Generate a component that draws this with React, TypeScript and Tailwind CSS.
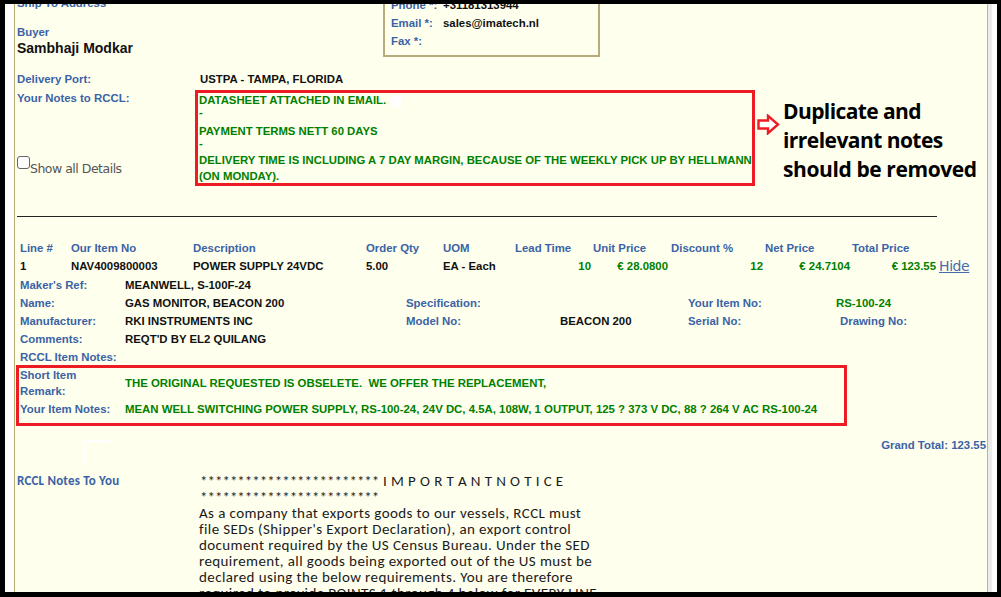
import React from "react";

const T = "font-['Liberation_Sans',Arial,sans-serif]";
const C = "font-['Carlito','Lato',sans-serif]";
const BL = "text-[#3a63a6] font-bold";
const GR = "text-[#008000] font-bold";
const BK = "text-[#111111] font-bold";

function Arrow() {
  return (
    <svg width="23" height="21" viewBox="0 0 23 21" className="block">
      <path
        d="M1.5 6.5 H11 V1.8 L21 10.5 L11 19.2 V14.5 H1.5 Z"
        fill="#ffffff"
        stroke="#ed1c24"
        strokeWidth="2.4"
        strokeLinejoin="miter"
      />
    </svg>
  );
}

export default function App() {
  const cols = "grid grid-cols-[51px_122px_173px_77px_72px_78px_78px_94px_87px_86px_auto]";
  return (
    <div className="w-[1001px] h-[597px] bg-black pt-[4px] pb-[5px] pl-[5px] pr-[4px] overflow-hidden">
      <div className="flex h-full bg-white">
        <div className="w-[9px] bg-white" />
        <div className={`flex-1 bg-[#ffffee] border-l border-r border-l-[#b3a96e] border-r-[#bdb49a] overflow-hidden text-[11.4px] leading-[18px] ${T}`}>
          <div className="-mt-[12px]">
            {/* Section A */}
            <div className="flex h-[65px]">
              <div className="w-[368px] pl-[2px] pt-[2px]">
                <div className={`h-[18px] ${BL}`}>Ship To Address</div>
                <div className={`mt-[13px] h-[14px] leading-[14px] ${BL}`}>Buyer</div>
                <div className={`h-[18px] text-[14px] text-[#111] font-bold`}>Sambhaji Modkar</div>
              </div>
              <div className="w-[217px] h-[65px] border-2 border-t-0 border-[#b8aa7c] pl-[6px] pt-[4px]">
                <div className="flex h-[18px]">
                  <span className={`w-[52px] ${BL}`}>Phone *:</span>
                  <span className={BK}>+31181313944</span>
                </div>
                <div className="flex h-[18px]">
                  <span className={`w-[52px] ${BL}`}>Email *:</span>
                  <span className={BK}>sales@imatech.nl</span>
                </div>
                <div className="flex h-[18px]">
                  <span className={`w-[52px] ${BL}`}>Fax *:</span>
                </div>
              </div>
            </div>

            {/* Delivery port */}
            <div className="mt-[13px] flex h-[18px]">
              <div className={`w-[180px] pl-[2px] ${BL}`}>Delivery Port:</div>
              <div className={`pl-[5px] ${BK}`}>USTPA - TAMPA, FLORIDA</div>
            </div>

            {/* Notes */}
            <div className="mt-[2px] flex">
              <div className="w-[180px] pl-[2px] flex flex-col">
                <div className={`mt-[1px] h-[14px] leading-[14px] ${BL}`}>Your Notes to RCCL:</div>
                <div className="mt-[51px] flex">
                  <div className="w-[13px] h-[13px] rounded-[3px] border border-[#666666] bg-[#fdfdfd]" />
                  <span className="mt-[6px] leading-[14px] text-[12.5px] text-[#555555] font-['DejaVu_Sans',sans-serif] font-normal tracking-[-0.5px]">Show all Details</span>
                </div>
              </div>
              <div className={`w-[560px] h-[96px] border-[3px] border-[#ed1c24] pl-[1px] pt-[1px] whitespace-nowrap text-[11.35px] ${GR}`}>
                <div className="h-[12px] leading-[12px] flex">
                  <span>DATASHEET ATTACHED IN EMAIL.</span>
                  <span className="ml-[5px] mt-[2px] w-[10px] h-[11px] bg-white" />
                </div>
                <div className="h-[12px] leading-[12px]">-</div>
                <div className="mt-[7px] h-[12px] leading-[12px]">PAYMENT TERMS NETT 60 DAYS</div>
                <div className="h-[12px] leading-[12px]">-</div>
                <div className="mt-[3px] h-[16px] leading-[16px]">DELIVERY TIME IS INCLUDING A 7 DAY MARGIN, BECAUSE OF THE WEEKLY PICK UP BY HELLMANN</div>
                <div className="h-[16px] leading-[16px]">(ON MONDAY).</div>
              </div>
              <div className="ml-[2px] mt-[24px]">
                <Arrow />
              </div>
              <div className="ml-[3px] mt-[7px] text-[21px] leading-[29px] font-bold text-black font-['Open_Sans',sans-serif] whitespace-nowrap">
                <div className="tracking-[-0.6px]">Duplicate and</div>
                <div className="tracking-[-0.55px]">irrelevant notes</div>
                <div className="tracking-[-0.4px]">should be removed</div>
              </div>
            </div>

            {/* hr */}
            <div className="mt-[30px] ml-[2px] w-[920px] h-[1px] bg-[#222222]" />

            {/* table */}
            <div className="ml-[5px] mt-[22px]">
              <div className={`${cols} h-[18px] whitespace-nowrap ${BL}`}>
                <div>Line #</div>
                <div>Our Item No</div>
                <div>Description</div>
                <div>Order Qty</div>
                <div>UOM</div>
                <div>Lead Time</div>
                <div>Unit Price</div>
                <div>Discount %</div>
                <div>Net Price</div>
                <div>Total Price</div>
                <div />
              </div>
              <div className={`${cols} h-[18px] whitespace-nowrap`}>
                <div className={BK}>1</div>
                <div className={BK}>NAV4009800003</div>
                <div className={BK}>POWER SUPPLY 24VDC</div>
                <div className={BK}>5.00</div>
                <div className={BK}>EA - Each</div>
                <div className={`text-right pr-[2px] ${GR}`}>10</div>
                <div className={`text-right pr-[3px] ${GR}`}>€ 28.0800</div>
                <div className={`text-right pr-[2px] ${GR}`}>12</div>
                <div className={`text-right pr-[2px] ${GR}`}>€ 24.7104</div>
                <div className={`text-right pr-[2px] ${GR}`}>€ 123.55</div>
                <div className="pl-[1px] text-[14px] leading-[18px] text-[#4a6aae] underline font-['DejaVu_Sans',sans-serif] tracking-[-0.4px]">Hide</div>
              </div>

              {/* details */}
              <div className="mt-[1px] grid grid-cols-[105px_281px_154px_128px_148px_auto] auto-rows-[18px] whitespace-nowrap">
                <div className={BL}>Maker's Ref:</div>
                <div className={BK}>MEANWELL, S-100F-24</div>
                <div />
                <div />
                <div />
                <div />

                <div className={BL}>Name:</div>
                <div className={BK}>GAS MONITOR, BEACON 200</div>
                <div className={BL}>Specification:</div>
                <div />
                <div className={BL}>Your Item No:</div>
                <div className={GR}>RS-100-24</div>

                <div className={BL}>Manufacturer:</div>
                <div className={BK}>RKI INSTRUMENTS INC</div>
                <div className={BL}>Model No:</div>
                <div className={BK}>BEACON 200</div>
                <div className={BL}>Serial No:</div>
                <div className={`pl-[4px] ${BL}`}>Drawing No:</div>

                <div className={BL}>Comments:</div>
                <div className={BK}>REQT'D BY EL2 QUILANG</div>
                <div />
                <div />
                <div />
                <div />

                <div className={`col-span-2 ${BL}`}>RCCL Item Notes:</div>
              </div>
            </div>

            {/* red box 2 */}
            <div className="-mt-[1px] ml-[1px] w-[831px] h-[61px] border-[3px] border-[#ed1c24] pl-[1px] whitespace-nowrap">
              <div className="-mt-[1px] flex items-center">
                <div className={`w-[105px] leading-[16px] ${BL}`}>
                  Short Item
                  <br />
                  Remark:
                </div>
                <div className={`leading-[16px] whitespace-pre ${GR}`}>THE ORIGINAL REQUESTED IS OBSELETE.  WE OFFER THE REPLACEMENT,</div>
              </div>
              <div className="mt-[2px] flex h-[16px] leading-[16px]">
                <div className={`w-[105px] ${BL}`}>Your Item Notes:</div>
                <div className={GR}>MEAN WELL SWITCHING POWER SUPPLY, RS-100-24, 24V DC, 4.5A, 108W, 1 OUTPUT, 125 ? 373 V DC, 88 ? 264 V AC RS-100-24</div>
              </div>
            </div>

            {/* grand total row */}
            <div className="mt-[11px] flex justify-between">
              <div className="ml-[68px] mt-[3px] w-[28px] h-[27px] border-l-2 border-t-2 border-white" />
              <div className={`pr-[1px] h-[16px] leading-[16px] ${BL}`}>Grand Total: 123.55</div>
            </div>

            {/* RCCL Notes */}
            <div className="mt-[6px] flex">
              <div className={`ml-[2px] w-[183px] leading-[16px] text-[13px] tracking-[0.2px] ${BL} ${C}`}>RCCL Notes To You</div>
              <div className={`leading-[16px] text-[#1a1a1a] text-[15px] tracking-[0.4px] whitespace-nowrap ${C}`}>
                <div className="whitespace-pre">
                  <span className="tracking-[0px]">************************</span>
                  <span> I M P O R T A N T N O T I C E</span>
                </div>
                <div className="tracking-[0px]">************************</div>
                <div className="-ml-[1px]">
                  <div>As a company that exports goods to our vessels, RCCL must</div>
                  <div>file SEDs (Shipper's Export Declaration), an export control</div>
                  <div>document required by the US Census Bureau. Under the SED</div>
                  <div>requirement, all goods being exported out of the US must be</div>
                  <div>declared using the below requirements. You are therefore</div>
                  <div>required to provide POINTS 1 through 4 below for EVERY LINE</div>
                </div>
              </div>
            </div>
          </div>
        </div>
        <div className="w-[4px] bg-[#ececec]" />
        <div className="w-[5px] bg-white" />
      </div>
    </div>
  );
}
